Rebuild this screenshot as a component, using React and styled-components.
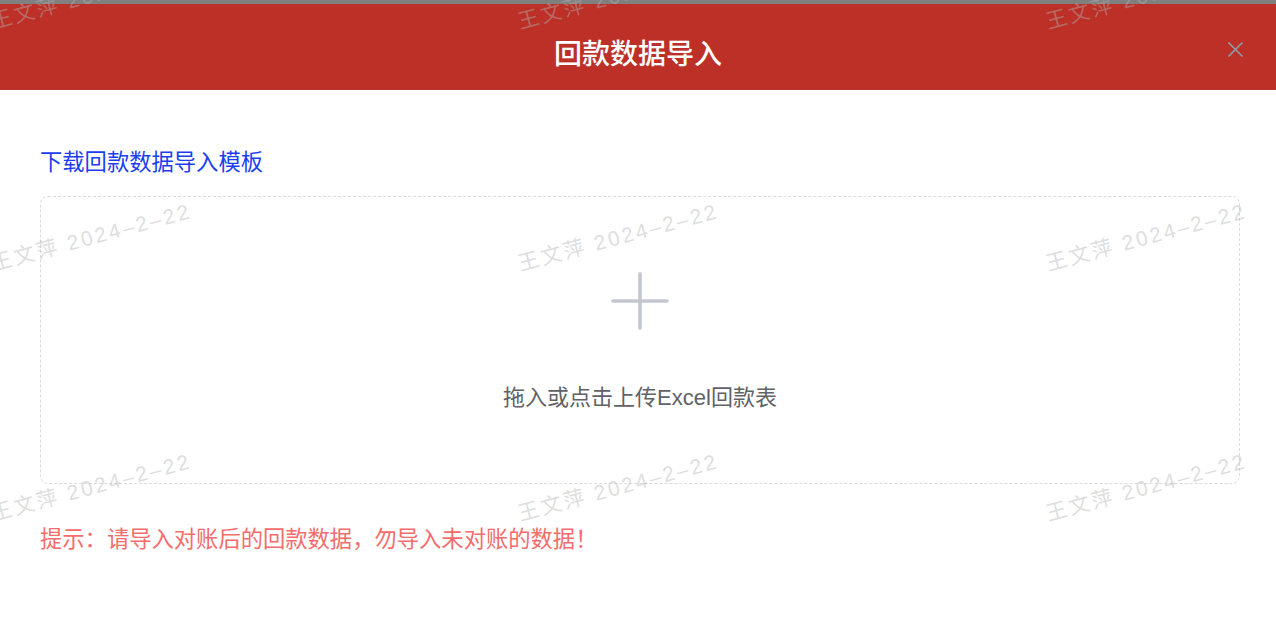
import React from "react";
import styled, { createGlobalStyle } from "styled-components";

const GlobalStyle = createGlobalStyle`
  html, body { margin: 0; padding: 0; background: #ffffff; }
  body {
    font-family: "Liberation Sans", "Noto Sans CJK SC", sans-serif;
    -webkit-font-smoothing: antialiased;
  }
  * { box-sizing: border-box; }
`;

const Page = styled.div`
  position: relative;
  width: 100%;
  height: 618px;
  overflow: hidden;
  background: #ffffff;
`;

const TopStrip = styled.div`
  height: 4px;
  background: #808080;
`;

const Header = styled.header`
  height: 86px;
  background: #bc3027;
  display: grid;
  grid-template-columns: 1fr auto 1fr;
  align-items: start;
  padding: 31px 33px 0;
`;

const Title = styled.h1`
  grid-column: 2;
  margin: 0;
  font-size: 28px;
  line-height: 40px;
  font-weight: 500;
  color: #ffffff;
`;

const CloseButton = styled.button`
  grid-column: 3;
  justify-self: end;
  margin-top: 7px;
  width: 15px;
  height: 15px;
  padding: 0;
  border: none;
  background: transparent;
  display: flex;
  cursor: pointer;
`;

const Body = styled.main`
  padding: 57px 36px 0 40px;
  display: flex;
  flex-direction: column;
`;

const TemplateLink = styled.a`
  align-self: flex-start;
  font-size: 22.3px;
  line-height: 32px;
  color: #1a3ef0;
  text-decoration: none;
  cursor: pointer;
`;

const DropZone = styled.div`
  margin-top: 17px;
  height: 288px;
  border: 1px dashed #d9dbe0;
  border-radius: 8px;
  display: flex;
  flex-direction: column;
  align-items: center;
  padding-top: 75px;
  cursor: pointer;
`;

const DropText = styled.p`
  margin: 52px 0 0;
  font-size: 22px;
  line-height: 32px;
  color: #606266;
`;

const Tip = styled.p`
  margin: 40px 0 0;
  font-size: 22.3px;
  line-height: 32px;
  color: #f56c6c;
`;

const WatermarkLayer = styled.div`
  position: absolute;
  inset: 0;
  pointer-events: none;
`;

const Watermark = styled.span`
  position: absolute;
  white-space: nowrap;
  font-family: "Liberation Sans", "Noto Sans CJK SC", sans-serif;
  font-size: 21px;
  line-height: 21px;
  letter-spacing: 2.5px;
  color: rgba(180, 180, 180, 0.45);
  transform-origin: 0 100%;
  transform: rotate(-15deg);
  user-select: none;
`;

const marks = [];
const cols = [-6, 521, 1049];
const rows = [32, 274, 524];
rows.forEach((y) => cols.forEach((x) => marks.push({ x, y })));

export default function App() {
  return (
    <>
      <GlobalStyle />
      <Page>
        <TopStrip />
        <Header>
          <Title>回款数据导入</Title>
          <CloseButton aria-label="关闭">
            <svg width="15" height="15" viewBox="0 0 15 15">
              <path
                d="M1 1 L14 14 M14 1 L1 14"
                stroke="#909aa4"
                strokeWidth="1.6"
                strokeLinecap="square"
              />
            </svg>
          </CloseButton>
        </Header>
        <Body>
          <TemplateLink>下载回款数据导入模板</TemplateLink>
          <DropZone>
            <svg width="58" height="58" viewBox="0 0 58 58">
              <path
                d="M29 2 V56 M2 29 H56"
                stroke="#c3c6cf"
                strokeWidth="3.6"
                strokeLinecap="round"
              />
            </svg>
            <DropText>拖入或点击上传Excel回款表</DropText>
          </DropZone>
          <Tip>提示：请导入对账后的回款数据，勿导入未对账的数据！</Tip>
        </Body>
        <WatermarkLayer>
          {marks.map((m, i) => (
            <Watermark key={i} style={{ left: m.x, top: m.y - 21 }}>
              王文萍 2024–2–22
            </Watermark>
          ))}
        </WatermarkLayer>
      </Page>
    </>
  );
}
